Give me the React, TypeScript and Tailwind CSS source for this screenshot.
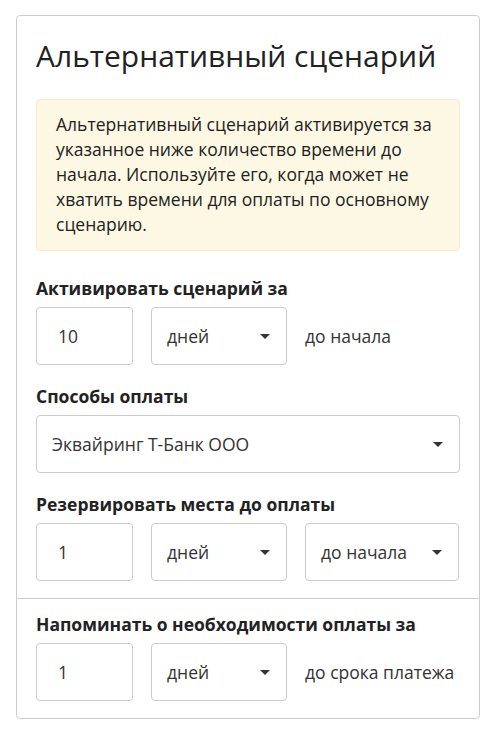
function Caret() {
  return (
    <svg width="10" height="5" viewBox="0 0 10 5" className="shrink-0">
      <path d="M0 0h10L5 5z" fill="#333" />
    </svg>
  )
}

function NumberBox({ value }: { value: string }) {
  return (
    <div className="flex h-[58px] w-[97px] shrink-0 items-center rounded border border-[#ccc] bg-white pl-[21px] text-[#333]">
      {value}
    </div>
  )
}

function SelectBox({ value, className }: { value: string; className: string }) {
  return (
    <div
      className={`flex h-[58px] shrink-0 items-center justify-between rounded border border-[#ccc] bg-white pl-[15px] pr-[16px] text-[#333] ${className}`}
    >
      <span>{value}</span>
      <Caret />
    </div>
  )
}

function Label({ children }: { children: string }) {
  return <div className="mb-[7px] font-bold leading-6 text-[#222]">{children}</div>
}

export default function App() {
  return (
    <div className="min-h-[740px] bg-white pt-[15px] pl-4 font-['Open_Sans',sans-serif] text-[17.5px] leading-[25px] text-[#222]">
      <div className="w-[464px] rounded border border-[#ccc]">
        <div className="px-[19px] pt-[22px] pb-[17px]">
          <h2 className="mb-[25px] text-[30px] leading-[1.2] font-normal text-[#222]">
            Альтернативный сценарий
          </h2>

          <div className="mb-[25px] rounded border border-[#faebcc] bg-[#fcf8e3] px-[19px] pt-[12px] pb-[13px] text-[#222]">
            Альтернативный сценарий активируется за указанное ниже количество времени до начала.
            Используйте его, когда может не хватить времени для оплаты по основному сценарию.
          </div>

          <Label>Активировать сценарий за</Label>
          <div className="mb-[19px] flex items-center gap-[18px]">
            <NumberBox value="10" />
            <SelectBox value="дней" className="w-[136px]" />
            <span className="text-[#333]">до начала</span>
          </div>

          <Label>Способы оплаты</Label>
          <div className="mb-[19px]">
            <SelectBox value="Эквайринг Т-Банк ООО" className="w-full" />
          </div>

          <Label>Резервировать места до оплаты</Label>
          <div className="flex items-center gap-[18px]">
            <NumberBox value="1" />
            <SelectBox value="дней" className="w-[136px]" />
            <SelectBox value="до начала" className="w-[154px]" />
          </div>
        </div>

        <div className="border-t border-[#ccc] px-[19px] pt-[13px] pb-[17px]">
          <Label>Напоминать о необходимости оплаты за</Label>
          <div className="flex items-center gap-[18px]">
            <NumberBox value="1" />
            <SelectBox value="дней" className="w-[136px]" />
            <span className="text-[#333]">до срока платежа</span>
          </div>
        </div>
      </div>
    </div>
  )
}
